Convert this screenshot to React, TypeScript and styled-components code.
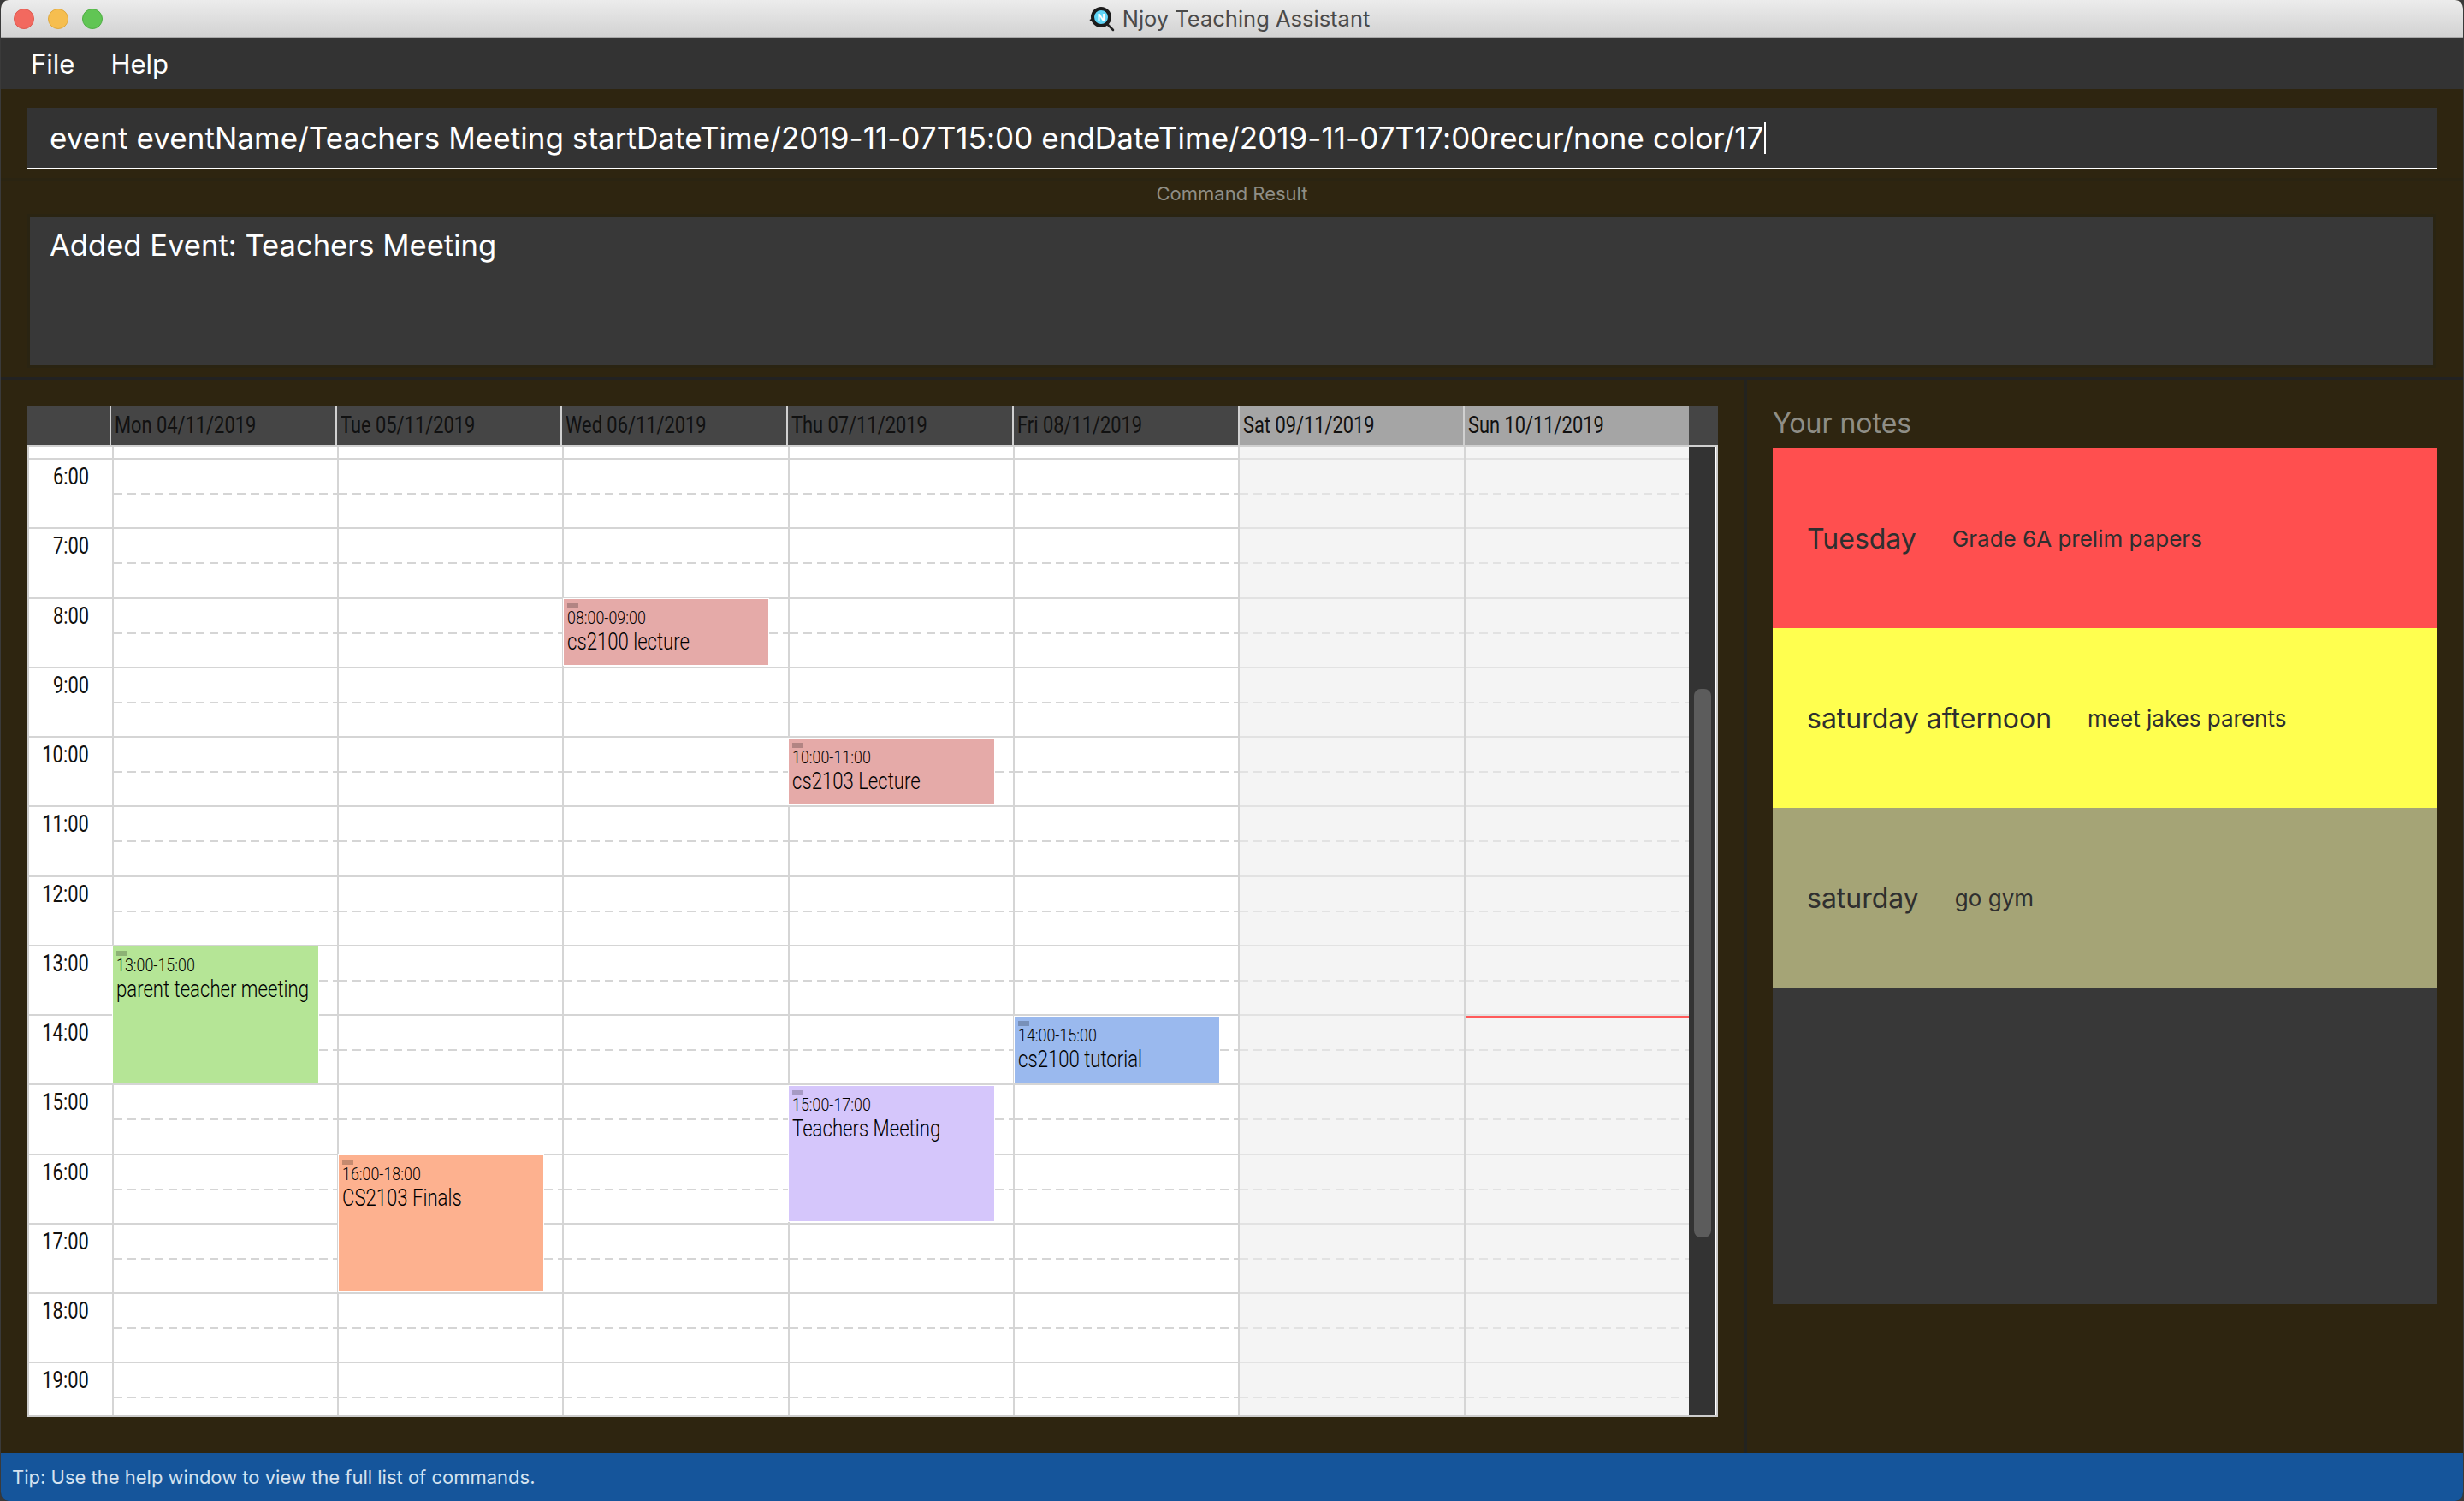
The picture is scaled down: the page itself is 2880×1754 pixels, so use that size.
import React from "react";
import styled, { createGlobalStyle } from "styled-components";

const Global = createGlobalStyle`
  html, body { margin: 0; padding: 0; background: #3a3a3a; }
  * { box-sizing: border-box; }
`;

const UI = `"Inter", "Liberation Sans", sans-serif`;
const CAL = `"Roboto", "Liberation Sans", sans-serif`;

const Window = styled.div`
  width: 2880px;
  height: 1754px;
  display: flex;
  flex-direction: column;
  overflow: hidden;
  border-radius: 10px;
  background: #2e2510;
  border-left: 1px solid #3a3a3a;
  border-right: 1px solid #3a3a3a;
  font-family: ${UI};
`;

const TitleBar = styled.header`
  position: relative;
  flex: 0 0 44px;
  display: flex;
  align-items: center;
  justify-content: center;
  gap: 9px;
  background: linear-gradient(#ececec, #d2d2d2);
  border-bottom: 1px solid #a8a8a8;
  color: #4a4a4a;
  font-size: 25.5px;
  padding-right: 6px;
`;

const Lights = styled.div`
  position: absolute;
  left: 15px;
  top: 10px;
  display: flex;
  gap: 16px;
`;

const Light = styled.span<{ $c: string; $b: string }>`
  width: 24px;
  height: 24px;
  border-radius: 50%;
  background: ${(p) => p.$c};
  border: 1px solid ${(p) => p.$b};
`;

const MenuBar = styled.nav`
  flex: 0 0 60px;
  display: flex;
  align-items: center;
  gap: 42px;
  padding-left: 35px;
  background: #333333;
  color: #ffffff;
  font-size: 31px;
`;

const Top = styled.section`
  flex: 0 0 336px;
  display: flex;
  flex-direction: column;
`;

const InputSlot = styled.div`
  flex: 0 0 104px;
  padding: 22px 31px 10px;
`;

const CommandInput = styled.div`
  height: 72px;
  display: flex;
  align-items: center;
  padding-left: 26px;
  background: #333333;
  border-bottom: 2px solid #ffffff;
  color: #ffffff;
  font-size: 35px;
  letter-spacing: 0.05px;
  white-space: nowrap;
`;

const Caret = styled.span`
  width: 2px;
  height: 37px;
  margin-left: 1px;
  background: #ffffff;
`;

const ResultLabel = styled.div`
  flex: 0 0 42px;
  display: flex;
  align-items: center;
  justify-content: center;
  padding-bottom: 10px;
  border-top: 4px solid #2a2412;
  color: #8f8e86;
  font-size: 22px;
`;

const ResultPanel = styled.div`
  margin: 0 32px 0 31px;
  height: 180px;
  padding: 11px 23px;
  background: #383838;
  border: 3px solid #2a2412;
  border-top-width: 4px;
  border-bottom-width: 4px;
  color: #ffffff;
  font-size: 34.6px;
`;

const Lower = styled.main`
  flex: 1;
  display: flex;
  min-height: 0;
  border-top: 4px solid #222222;
`;

const CalendarPane = styled.div`
  flex: 0 0 2038px;
  padding: 30px 0 0 31px;
`;

const Divider = styled.div`
  flex: 0 0 3px;
  background: #23231f;
`;

const Calendar = styled.div`
  width: 1976px;
  height: 1182px;
  display: flex;
  flex-direction: column;
  font-family: ${CAL};
  color: #111111;
`;

const HeaderRow = styled.div`
  flex: 0 0 48px;
  display: flex;
  background: #454545;
  border-bottom: 2px solid #d0d0d0;
`;

const Corner = styled.div`
  flex: 0 0 96px;
`;

const DayHead = styled.div<{ $weekend: boolean }>`
  flex: 1 1 0;
  display: flex;
  align-items: center;
  padding: 0 0 2px 4px;
  background: ${(p) => (p.$weekend ? "#a5a5a5" : "#454545")};
  border-left: 2px solid #d0d0d0;
  font-size: 28px;
  white-space: nowrap;
  overflow: hidden;
`;

const ScrollHead = styled.div`
  flex: 0 0 34px;
`;

const Narrow = styled.span<{ $x: number; $right?: boolean }>`
  display: inline-block;
  white-space: nowrap;
  transform: scaleX(${(p) => p.$x});
  transform-origin: ${(p) => (p.$right ? "right" : "left")} center;
`;

const Body = styled.div`
  flex: 1;
  min-height: 0;
  display: flex;
  overflow: hidden;
  background: #ffffff;
  border: 2px solid #cdcdcd;
  border-top: 0;
`;

const TimeColumn = styled.div`
  flex: 0 0 94px;
  padding-top: 13px;
`;

const TimeCell = styled.div`
  height: 81.25px;
  border-top: 2px solid #d5d5d5;
  padding: 2px 27px 0 0;
  display: flex;
  justify-content: flex-end;
  line-height: 36px;
  font-size: 28px;
`;

const DayColumn = styled.div<{ $weekend: boolean }>`
  position: relative;
  flex: 1 1 0;
  padding-top: 13px;
  border-left: 2px solid #d5d5d5;
  background: ${(p) => (p.$weekend ? "#f4f4f4" : "#ffffff")};
`;

const HourCell = styled.div<{ $weekend: boolean }>`
  position: relative;
  height: 81.25px;
  border-top: 2px solid ${(p) => (p.$weekend ? "#e2e2e2" : "#d5d5d5")};
  &::after {
    content: "";
    position: absolute;
    left: 0;
    right: 0;
    top: 39px;
    height: 2px;
    background: repeating-linear-gradient(
      90deg,
      ${(p) => (p.$weekend ? "#e2e2e2" : "#d5d5d5")} 0 10px,
      transparent 10px 16px
    );
  }
`;

const EventCard = styled.div<{ $bg: string; $top: number; $h: number }>`
  position: absolute;
  z-index: 1;
  left: -1.5px;
  top: ${(p) => p.$top}px;
  width: 241.5px;
  height: ${(p) => p.$h}px;
  padding: 5px 4px;
  background: ${(p) => p.$bg};
  border: 1px solid #ffffff;
  background-clip: padding-box;
  overflow: hidden;
  color: #000000;
`;

const EventTag = styled.div`
  width: 13px;
  height: 6px;
  background: rgba(0, 0, 0, 0.22);
`;

const EventTime = styled.div`
  height: 22px;
  line-height: 22px;
  font-size: 21px;
  font-weight: 300;
`;

const EventName = styled.div`
  height: 34px;
  line-height: 34px;
  font-size: 27px;
  font-weight: 300;
`;

const NowLine = styled.div<{ $top: number }>`
  position: absolute;
  z-index: 1;
  left: 0;
  right: 0;
  top: ${(p) => p.$top}px;
  height: 3px;
  background: #ff5a5a;
`;

const ScrollTrack = styled.div`
  flex: 0 0 32px;
  padding: 283px 0 0 6px;
  background: #333333;
  border-right: 2px solid #ffffff;
`;

const ScrollThumb = styled.div`
  width: 20px;
  height: 641px;
  border-radius: 8px;
  background: #5c5c5c;
`;

const NotesPane = styled.aside`
  flex: 1;
  padding: 30px 31px 0 30px;
`;

const NotesTitle = styled.h2`
  margin: 0;
  height: 50px;
  line-height: 42px;
  color: #8f8e86;
  font-size: 32px;
  font-weight: 400;
`;

const NotesList = styled.div`
  height: 1000px;
  background: #383838;
`;

const Note = styled.div<{ $bg: string }>`
  height: 210px;
  display: flex;
  align-items: center;
  gap: 42px;
  padding-left: 40px;
  background: ${(p) => p.$bg};
  color: #2f2f2f;
`;

const NoteDay = styled.span`
  font-size: 32px;
`;

const NoteText = styled.span`
  font-size: 26px;
`;

const StatusBar = styled.footer`
  flex: 0 0 56px;
  display: flex;
  align-items: center;
  padding-left: 13px;
  background: #15559b;
  color: #d5e2ef;
  font-size: 22px;
`;

type Ev = { start: number; dur: number; time: string; name: string; bg: string };
type Day = { label: string; weekend: boolean; events: Ev[]; now?: number };

const hours = Array.from({ length: 14 }, (_, i) => i + 6);

const days: Day[] = [
  {
    label: "Mon 04/11/2019",
    weekend: false,
    events: [{ start: 13, dur: 2, time: "13:00-15:00", name: "parent teacher meeting", bg: "#b5e596" }],
  },
  {
    label: "Tue 05/11/2019",
    weekend: false,
    events: [{ start: 16, dur: 2, time: "16:00-18:00", name: "CS2103 Finals", bg: "#fdb18f" }],
  },
  {
    label: "Wed 06/11/2019",
    weekend: false,
    events: [{ start: 8, dur: 1, time: "08:00-09:00", name: "cs2100 lecture", bg: "#e5aaa8" }],
  },
  {
    label: "Thu 07/11/2019",
    weekend: false,
    events: [
      { start: 10, dur: 1, time: "10:00-11:00", name: "cs2103 Lecture", bg: "#e5aaa8" },
      { start: 15, dur: 2, time: "15:00-17:00", name: "Teachers Meeting", bg: "#d5c6fb" },
    ],
  },
  {
    label: "Fri 08/11/2019",
    weekend: false,
    events: [{ start: 14, dur: 1, time: "14:00-15:00", name: "cs2100 tutorial", bg: "#9ab9ee" }],
  },
  { label: "Sat 09/11/2019", weekend: true, events: [] },
  { label: "Sun 10/11/2019", weekend: true, events: [], now: 665 },
];

const notes = [
  { day: "Tuesday", text: "Grade 6A prelim papers", bg: "#ff4f4f" },
  { day: "saturday afternoon", text: "meet jakes parents", bg: "#ffff4f" },
  { day: "saturday", text: "go gym", bg: "#a5a476" },
];

const ROW = 81.25;

const Logo = () => (
  <svg width="30" height="30" viewBox="0 0 30 30" aria-hidden="true">
    <path d="M20 20 L28 28" stroke="#222" strokeWidth="2.5" strokeLinecap="round" />
    <path d="M1 17 L5 15" stroke="#222" strokeWidth="2" />
    <circle cx="14" cy="13" r="10" fill="#5fd3f5" stroke="#1c1c1c" strokeWidth="4" />
    <text x="14" y="18" textAnchor="middle" fontSize="13" fontWeight="700" fontFamily="Roboto, sans-serif" fill="#ffffff">
      N
    </text>
  </svg>
);

export default function App() {
  return (
    <>
      <Global />
      <Window>
        <TitleBar>
          <Lights>
            <Light $c="#f2695f" $b="#dd5a50" />
            <Light $c="#f6be4f" $b="#dfa83e" />
            <Light $c="#61c554" $b="#4fae44" />
          </Lights>
          <Logo />
          <span>Njoy Teaching Assistant</span>
        </TitleBar>
        <MenuBar>
          <span>File</span>
          <span>Help</span>
        </MenuBar>
        <Top>
          <InputSlot>
            <CommandInput>
              <span>
                event eventName/Teachers Meeting startDateTime/2019-11-07T15:00 endDateTime/2019-11-07T17:00recur/none
                color/17
              </span>
              <Caret />
            </CommandInput>
          </InputSlot>
          <ResultLabel>Command Result</ResultLabel>
          <ResultPanel>Added Event: Teachers Meeting</ResultPanel>
        </Top>
        <Lower>
          <CalendarPane>
            <Calendar>
              <HeaderRow>
                <Corner />
                {days.map((d) => (
                  <DayHead key={d.label} $weekend={d.weekend}>
                    <Narrow $x={0.78}>{d.label}</Narrow>
                  </DayHead>
                ))}
                <ScrollHead />
              </HeaderRow>
              <Body>
                <TimeColumn>
                  {hours.map((h) => (
                    <TimeCell key={h}>
                      <Narrow $x={0.78} $right>
                        {h}:00
                      </Narrow>
                    </TimeCell>
                  ))}
                </TimeColumn>
                {days.map((d) => (
                  <DayColumn key={d.label} $weekend={d.weekend}>
                    {hours.map((h) => (
                      <HourCell key={h} $weekend={d.weekend} />
                    ))}
                    {d.events.map((e) => (
                      <EventCard
                        key={e.name}
                        $bg={e.bg}
                        $top={13 + (e.start - 6) * ROW + 1.5}
                        $h={e.dur * ROW - 2}
                      >
                        <EventTag />
                        <EventTime>
                          <Narrow $x={0.85}>{e.time}</Narrow>
                        </EventTime>
                        <EventName>
                          <Narrow $x={0.82}>{e.name}</Narrow>
                        </EventName>
                      </EventCard>
                    ))}
                    {d.now !== undefined && <NowLine $top={d.now} />}
                  </DayColumn>
                ))}
                <ScrollTrack>
                  <ScrollThumb />
                </ScrollTrack>
              </Body>
            </Calendar>
          </CalendarPane>
          <Divider />
          <NotesPane>
            <NotesTitle>Your notes</NotesTitle>
            <NotesList>
              {notes.map((n) => (
                <Note key={n.day} $bg={n.bg}>
                  <NoteDay>{n.day}</NoteDay>
                  <NoteText>{n.text}</NoteText>
                </Note>
              ))}
            </NotesList>
          </NotesPane>
        </Lower>
        <StatusBar>Tip: Use the help window to view the full list of commands.</StatusBar>
      </Window>
    </>
  );
}
